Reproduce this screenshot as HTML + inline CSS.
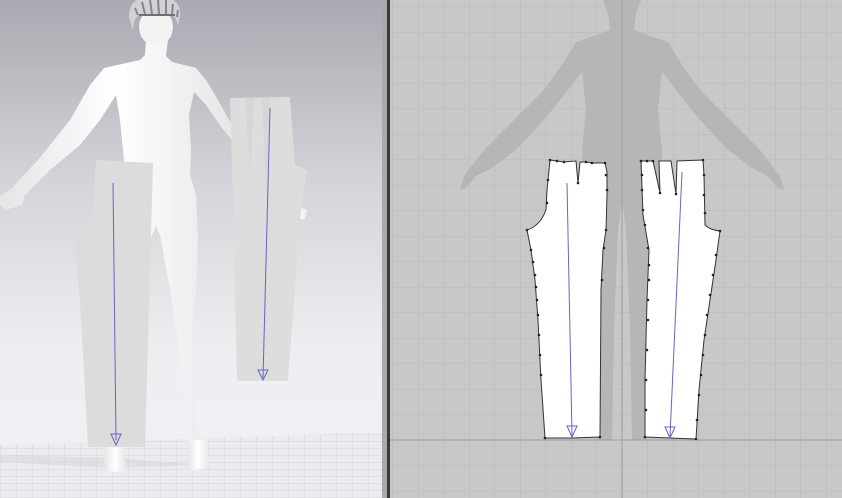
<!DOCTYPE html>
<html><head><meta charset="utf-8"><style>
html,body{margin:0;padding:0;width:842px;height:498px;overflow:hidden;background:#c8c8c8}
svg{display:block}
</style></head><body>
<svg width="842" height="498" viewBox="0 0 842 498" xmlns="http://www.w3.org/2000/svg">
<defs>
<linearGradient id="bg" x1="0" y1="0" x2="0" y2="1">
<stop offset="0" stop-color="#a9a9b1"/>
<stop offset="0.35" stop-color="#d2d2d8"/>
<stop offset="0.7" stop-color="#eeeef2"/>
<stop offset="1" stop-color="#f2f2f6"/>
</linearGradient>
<linearGradient id="body" x1="0" y1="0" x2="1" y2="0">
<stop offset="0" stop-color="#e4e4e6"/>
<stop offset="0.5" stop-color="#ffffff"/>
<stop offset="1" stop-color="#e6e6e8"/>
</linearGradient>
<pattern id="grid" x="0" y="0" width="25.5" height="25.5" patternUnits="userSpaceOnUse" patternTransform="translate(622 440)">
<path d="M0 0H25.5M0 0V25.5" stroke="#b9b9b9" stroke-width="1" fill="none"/>
</pattern>
<pattern id="floor" x="0" y="0" width="16" height="7" patternUnits="userSpaceOnUse">
<path d="M0 0H16M0 0V7" stroke="#d4d4d8" stroke-width="1" fill="none"/>
</pattern>
</defs>

<rect x="0" y="0" width="386" height="498" fill="url(#bg)"/>
<path d="M0 445 L386 432 L386 498 L0 498Z" fill="#ececf0"/>
<path d="M0 445 L386 432 L386 498 L0 498Z" fill="url(#floor)"/>
<path d="M0 462 L110 468 L200 465 L120 458 L0 455Z" fill="#dadade" opacity="0.7"/>

<g fill="url(#body)">
<path d="M146 40 L168 40 L166 56 L172 62 L196 68 L206 80 L218 100 L232 125 L232 140 L222 128 L206 105 L194 92 L189 115 L191 150 L190 175 L196 195 L198 240 L196 290 L192 330 L194 380 L196 420 L200 445 L188 445 L186 420 L182 380 L178 340 L170 290 L160 235 L156 226 L150 240 L135 300 L125 360 L120 420 L112 440 L104 440 L100 400 L102 320 L112 240 L122 200 L124 160 L120 120 L116 95 L100 120 L80 145 L50 170 L25 195 L22 205 L6 210 L0 205 L0 196 L12 188 L38 160 L70 120 L90 85 L104 68 L140 60 L145 55 Z"/>
<path d="M292 205 L308 210 L304 220 L293 216Z"/>
<path d="M104 440 L124 440 L126 470 L108 473 L104 462Z"/>
<path d="M188 440 L206 440 L210 468 L192 470 L187 458Z"/>
</g>
<ellipse cx="156" cy="27" rx="17" ry="19" fill="#f3f3f4"/>
<path d="M129 18 Q128 -4 154 -4 Q182 -4 180 16 L178 26 Q176 14 168 14 L142 14 Q134 15 133 30 Z" fill="#d2d2d6"/>
<path d="M135 8 L138 15 M142 2 L145 14 M150 0 L152 14 M158 -1 L159 14 M166 0 L166 14 M173 4 L172 15 M178 10 L177 17" stroke="#85858a" stroke-width="2"/>
<path d="M139 15 L175 15" stroke="#6e6e74" stroke-width="2"/>

<path d="M96 160 L153 163 L145 447 L88 447 L80 300 L73 232 L92 218 Z" fill="#dcdcdc"/>
<path d="M230 98 L290 97 L295 165 L307 170 L300 220 L288 381 L237 381 L233 200 Z" fill="#dddddd"/>
<path d="M245 98 L250 175 L254 98 Z M262 98 L266 190 L270 98Z" fill="#d6d6d6"/>
<line x1="113" y1="183" x2="116" y2="440" stroke="#6a62c8" stroke-width="1"/>
<path d="M111 434 L121 434 L116 445Z" fill="none" stroke="#6a62c8" stroke-width="1"/>
<line x1="270" y1="108" x2="263" y2="378" stroke="#6a62c8" stroke-width="1"/>
<path d="M258 370 L268 370 L263 380Z" fill="none" stroke="#6a62c8" stroke-width="1"/>

<rect x="382" y="0" width="5" height="498" fill="#a9a9b0"/>
<rect x="387" y="0" width="3" height="498" fill="#3a3a3c"/>

<rect x="390" y="0" width="452" height="498" fill="#c8c8c8"/>
<rect x="390" y="0" width="452" height="498" fill="url(#grid)"/>

<path d="M603 0 L641 0 L636 14 L634 30 L650 36 L668 42 L680 62 L700 90 L730 120 L760 150 L780 176 L784 190 L778 188 L768 176 L752 168 L726 148 L700 120 L680 95 L662 72 L658 110 L662 150 L660 200 L656 260 L650 330 L646 440 L632 440 L630 330 L626 230 L622 200 L618 230 L614 330 L612 440 L598 440 L594 330 L588 260 L584 200 L582 150 L586 110 L582 72 L564 95 L544 120 L518 148 L492 168 L476 176 L466 188 L460 190 L464 176 L484 150 L514 120 L544 90 L564 62 L576 42 L594 36 L610 30 L608 14 Z" fill="#b6b6b6"/>

<line x1="622" y1="0" x2="622" y2="498" stroke="#9c9c9c" stroke-width="1"/>
<line x1="390" y1="440" x2="842" y2="440" stroke="#9c9c9c" stroke-width="1"/>

<g stroke="#333" stroke-width="1" fill="#ffffff">
<path d="M550 160 L557 161 L564 162 L576 161 L578 183 L580 162 L586 162 L592 163 L605 163 L607 172 L607 195 L606 230 L603 250 L601 290 L600 437 L572 438 L545 438 L541 380 L538 320 L535 280 L531 250 L527 230 Q540 226 546 210 L547 190 Z"/>
<path d="M641 161 L647 161 L653 161 L660 193 L659 161 L671 161 L676 194 L677 161 L703 160 L704 175 L705 225 Q710 230 720 231 L716 260 L710 300 L704 340 L699 390 L696 439 L670 438 L645 437 L645 380 L647 300 L649 250 L643 215 Z"/>
</g>
<g fill="#222">
<circle cx="550" cy="160" r="1.3"/><circle cx="557" cy="161" r="1.3"/><circle cx="564" cy="162" r="1.3"/><circle cx="578" cy="183" r="1.3"/><circle cx="586" cy="162" r="1.3"/><circle cx="592" cy="163" r="1.3"/><circle cx="605" cy="163" r="1.3"/><circle cx="606" cy="175" r="1.3"/><circle cx="607" cy="190" r="1.3"/><circle cx="606" cy="230" r="1.3"/><circle cx="604" cy="248" r="1.3"/><circle cx="602" cy="280" r="1.3"/><circle cx="600" cy="437" r="1.3"/><circle cx="545" cy="438" r="1.3"/><circle cx="527" cy="230" r="1.3"/><circle cx="548" cy="180" r="1.3"/><circle cx="547" cy="203" r="1.3"/>
<circle cx="531" cy="250" r="1.3"/><circle cx="533" cy="262" r="1.3"/><circle cx="535" cy="275" r="1.3"/><circle cx="536" cy="287" r="1.3"/><circle cx="537" cy="300" r="1.3"/><circle cx="538" cy="315" r="1.3"/><circle cx="539" cy="335" r="1.3"/><circle cx="540" cy="355" r="1.3"/><circle cx="541" cy="375" r="1.3"/>
<circle cx="641" cy="161" r="1.3"/><circle cx="647" cy="161" r="1.3"/><circle cx="653" cy="161" r="1.3"/><circle cx="660" cy="193" r="1.3"/><circle cx="676" cy="194" r="1.3"/><circle cx="703" cy="160" r="1.3"/><circle cx="704" cy="175" r="1.3"/><circle cx="704" cy="195" r="1.3"/><circle cx="705" cy="213" r="1.3"/><circle cx="720" cy="231" r="1.3"/><circle cx="716" cy="255" r="1.3"/><circle cx="713" cy="275" r="1.3"/><circle cx="710" cy="295" r="1.3"/><circle cx="707" cy="315" r="1.3"/><circle cx="705" cy="335" r="1.3"/><circle cx="703" cy="355" r="1.3"/><circle cx="701" cy="375" r="1.3"/><circle cx="699" cy="395" r="1.3"/><circle cx="697" cy="420" r="1.3"/><circle cx="696" cy="439" r="1.3"/><circle cx="645" cy="437" r="1.3"/>
<circle cx="642" cy="175" r="1.3"/><circle cx="642" cy="190" r="1.3"/><circle cx="643" cy="210" r="1.3"/><circle cx="645" cy="225" r="1.3"/><circle cx="648" cy="248" r="1.3"/><circle cx="649" cy="265" r="1.3"/><circle cx="649" cy="280" r="1.3"/><circle cx="648" cy="300" r="1.3"/><circle cx="648" cy="320" r="1.3"/><circle cx="647" cy="350" r="1.3"/><circle cx="646" cy="380" r="1.3"/><circle cx="646" cy="410" r="1.3"/>
</g>
<line x1="567" y1="183" x2="572" y2="435" stroke="#6a62c8" stroke-width="1"/>
<path d="M567 426 L577 426 L572 437Z" fill="none" stroke="#6a62c8" stroke-width="1"/>
<line x1="682" y1="172" x2="670" y2="436" stroke="#6a62c8" stroke-width="1"/>
<path d="M665 427 L675 427 L670 438Z" fill="none" stroke="#6a62c8" stroke-width="1"/>
</svg>
</body></html>
